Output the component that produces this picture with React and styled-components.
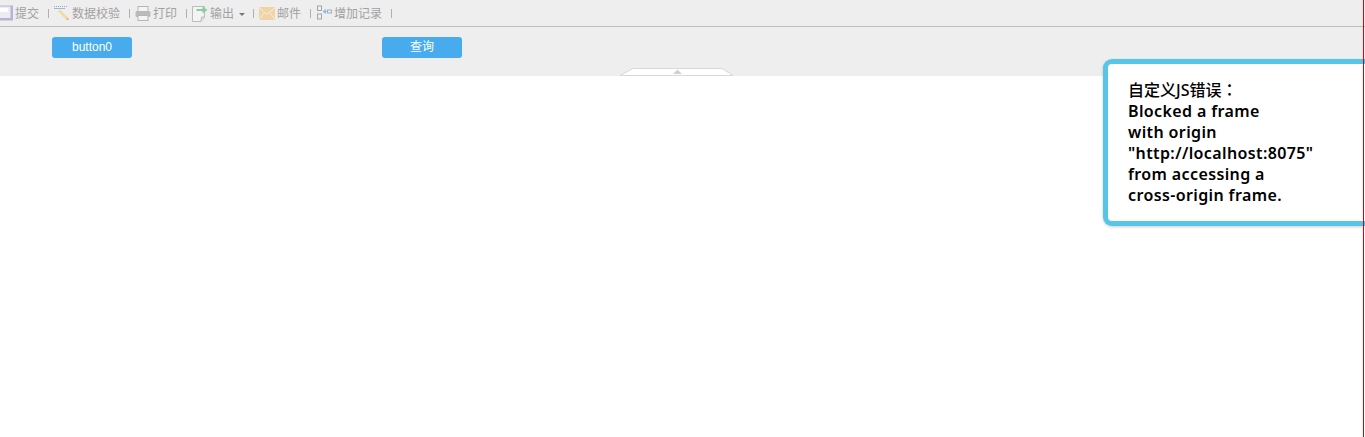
import React from "react";
import styled, { createGlobalStyle } from "styled-components";

const Global = createGlobalStyle`
  html, body { margin: 0; padding: 0; background: #fff; overflow: hidden; }
  body { font-family: "Liberation Sans", "Noto Sans CJK SC", sans-serif; }
`;

const Page = styled.div`
  position: relative;
  width: 1365px;
  height: 437px;
  overflow: hidden;
  background: #fff;
`;

const Toolbar = styled.div`
  display: flex;
  align-items: center;
  height: 26px;
  box-sizing: border-box;
  background: #eee;
`;

const Tool = styled.div`
  display: flex;
  align-items: center;
  gap: 2px;
  margin-left: ${(p) => p.$offset ?? 0}px;
  color: #a2a2a2;
  font: 12px/16px "Noto Sans CJK SC", sans-serif;
`;

const ToolIcon = styled.svg`
  display: block;
  flex: none;
`;

const Sep = styled.span`
  width: 1px;
  height: 9px;
  margin: 1px 5px 0 9px;
  background: #b0b0b0;
`;

const Caret = styled.span`
  width: 0;
  height: 0;
  margin: 2px -1px 0 3px;
  border-left: 3px solid transparent;
  border-right: 3px solid transparent;
  border-top: 3px solid #777;
`;

const Rule = styled.div`
  height: 1px;
  background: #bdbdbd;
`;

const Panel = styled.div`
  position: relative;
  height: 49px;
  box-sizing: border-box;
  padding-top: 10px;
  display: flex;
  background: #eee;
`;

const Action = styled.button`
  width: 80px;
  height: 21px;
  margin-left: ${(p) => p.$gap}px;
  padding: 0;
  border: 0;
  border-radius: 3px;
  background: #47abed;
  color: #fff;
  font: 12px/21px "Liberation Sans", "Noto Sans CJK SC", sans-serif;
`;

const Handle = styled.svg`
  position: absolute;
  left: 620px;
  bottom: 0;
  display: block;
`;

const Toast = styled.div`
  position: absolute;
  left: 1103px;
  top: 59px;
  width: 262px;
  height: 167px;
  box-sizing: border-box;
  padding: 16px 0 0 20px;
  background: #fff;
  border: 5px solid #56c5e8;
  border-right: 0;
  border-radius: 9px 0 0 9px;
  box-shadow: 0 1px 3px rgba(0, 0, 0, 0.2);
  color: #000;
  font: 600 16px/21px "Noto Sans", "Noto Sans CJK SC", sans-serif;
  letter-spacing: 0.38px;
`;

const ToastTitle = styled.div`
  white-space: nowrap;
  font-family: "Noto Sans", "Noto Sans CJK TC", sans-serif;
  font-weight: 500;
  letter-spacing: 0;
`;

const ToastLine = styled.div`
  white-space: nowrap;
`;

const RedEdge = styled.div`
  position: absolute;
  top: 0;
  bottom: 0;
  right: 1px;
  width: 1px;
  background: #e00000;
`;

const SaveIcon = () => (
  <ToolIcon width="16" height="16" viewBox="0 0 16 16">
    <rect y="0.500" width="16" height="15" fill="#b4b4d4" />
    <rect x="1" y="1.500" width="12.500" height="11.500" fill="#ecebf4" />
    <rect x="3" y="3" width="8" height="4" fill="#fff" />
  </ToolIcon>
);

const PencilIcon = () => (
  <ToolIcon width="16" height="16" viewBox="0 0 16 16">
    <path d="M0 1.500h14" stroke="#a5a5a5" strokeWidth="1" strokeDasharray="1 1" />
    <path d="M0 3.500h11" stroke="#88bdec" strokeWidth="1" />
    <path d="M4 6.500L6 4.500l8 8-2 2z" fill="#f1dc9f" />
    <path d="M12 14.500l2-2 .8 2.800z" fill="#f0a096" />
  </ToolIcon>
);

const PrintIcon = () => (
  <ToolIcon width="16" height="16" viewBox="0 0 16 16">
    <rect x="3" y="1.500" width="10" height="5" fill="#f4f4f4" stroke="#b5b5b5" />
    <rect x="0.500" y="6" width="15" height="6" rx="1.500" fill="#bababa" />
    <rect x="3" y="10.500" width="10" height="5" fill="#f4f4f4" stroke="#b5b5b5" />
  </ToolIcon>
);

const ExportIcon = () => (
  <ToolIcon width="16" height="17" viewBox="0 0 16 17">
    <path d="M.500 1.500h12v11l-3.500 4H.500z" fill="#f4f4f4" stroke="#bbb" />
    <path d="M9 16l.500-4h3.500" fill="#e2e2e2" stroke="#bbb" />
    <path d="M4.500 4h6V1.500l5 3.500-5 3.500V6h-6z" fill="#8bcca0" />
  </ToolIcon>
);

const MailIcon = () => (
  <ToolIcon width="16" height="13" viewBox="0 0 16 13">
    <rect width="16" height="13" fill="#f0d3a6" />
    <path d="M0 .500l8 7 8-7M0 12.500l5.500-7M16 12.500l-5.500-7" fill="none" stroke="#faeedb" />
  </ToolIcon>
);

const RecordIcon = () => (
  <ToolIcon width="16" height="16" viewBox="0 0 16 16">
    <rect x="1.500" y="1" width="4" height="4.500" fill="none" stroke="#a5a5a5" />
    <rect x="1.500" y="9" width="4" height="5" fill="none" stroke="#a5a5a5" />
    <path d="M7 6.500h4M7 6.500l2.500-2v4z" fill="#88bdec" stroke="#88bdec" strokeWidth="0.800" />
    <rect x="11.500" y="5" width="4" height="3" fill="none" stroke="#9db0c3" />
  </ToolIcon>
);

const tools = [
  { icon: <SaveIcon />, label: "提交", offset: -3 },
  { icon: <PencilIcon />, label: "数据校验" },
  { icon: <PrintIcon />, label: "打印" },
  { icon: <ExportIcon />, label: "输出", caret: true },
  { icon: <MailIcon />, label: "邮件" },
  { icon: <RecordIcon />, label: "增加记录" },
];

const lines = [
  "Blocked a frame",
  "with origin",
  '"http://localhost:8075"',
  "from accessing a",
  "cross-origin frame.",
];

export default function App() {
  return (
    <Page>
      <Global />
      <Toolbar>
        {tools.map((t) => (
          <React.Fragment key={t.label}>
            <Tool $offset={t.offset}>
              {t.icon}
              <span>{t.label}</span>
              {t.caret && <Caret />}
            </Tool>
            <Sep />
          </React.Fragment>
        ))}
      </Toolbar>
      <Rule />
      <Panel>
        <Action $gap={52}>button0</Action>
        <Action $gap={250}>查询</Action>
        <Handle width="114" height="8" viewBox="0 0 114 8">
          <path d="M0 7.500L13 .500h89L113 7.500z" fill="#fff" stroke="#d8d8d8" />
          <path d="M53 6l4.500-4.500L62 6z" fill="#d0d0d0" />
        </Handle>
      </Panel>
      <Toast>
        <ToastTitle>自定义JS错误：</ToastTitle>
        {lines.map((text) => (
          <ToastLine key={text}>{text}</ToastLine>
        ))}
      </Toast>
      <RedEdge />
    </Page>
  );
}
